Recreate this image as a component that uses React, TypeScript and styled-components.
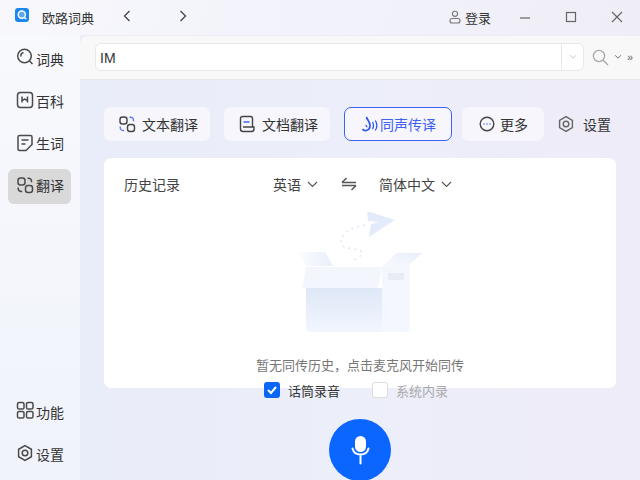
import React from "react";
import styled, { createGlobalStyle } from "styled-components";

const Global = createGlobalStyle`
  html, body { margin: 0; padding: 0; overflow: hidden; }
  body { font-family: "Noto Sans CJK SC", "Liberation Sans", sans-serif; }
  * { box-sizing: border-box; }
`;
const Root = styled.div`
  width: 640px; height: 480px; display: flex; flex-direction: column; overflow: hidden;
  background: linear-gradient(105deg, #f8f8fc 0%, #f3f4fb 30%, #eeecf6 100%);
  color: #333;
`;
const TitleBar = styled.header`
  height: 35px; flex: none; display: flex; align-items: center; padding-left: 15px;
`;
const Logo = styled.svg`width: 14px; height: 14px; flex: none; margin-top: -5px;`;
const AppName = styled.span`font-size: 13px; margin-left: 13px; width: 52px; line-height: 18px; margin-top: 1px; color: #333;`;
const NavIcon = styled.svg<{ $ml: number }>`
  width: 10px; height: 12px; margin-left: ${p => p.$ml}px; margin-top: -3px; flex: none;
  fill: none; stroke: #444; stroke-width: 1.3;
`;
const Login = styled.div`
  display: flex; align-items: center; gap: 4px; margin-left: auto; font-size: 13px; line-height: 18px; color: #333;
`;
const LoginIcon = styled.svg`width: 12px; height: 14px; fill: none; stroke: #777; stroke-width: 1.1; margin-top: -2px;`;
const WinButtons = styled.div`display: flex; margin-left: 26px; margin-right: 15px; gap: 30px; margin-top: -1px;`;
const WinIcon = styled.svg`width: 16px; height: 16px; fill: none; stroke: #666; stroke-width: 1.2;`;
const Body = styled.div`flex: 1; display: flex; min-height: 0;`;
const Sidebar = styled.nav`
  width: 80px; flex: none; display: flex; flex-direction: column; padding: 6px 8px 2px;
  background: linear-gradient(180deg, #f8f9fd 0%, #f0f3fb 100%);
`;
const SideItem = styled.div<{ $active?: boolean }>`
  width: 63px; height: 35px; display: flex; align-items: center; padding-left: 8px; gap: 2px;
  font-size: 14px; color: #333; border-radius: 6px; margin-bottom: 7px; flex: none;
  margin-top: ${p => (p.$active ? "2px" : "0")};
  padding-bottom: ${p => (p.$active ? "4px" : "0")};
  background: ${p => (p.$active ? "#d9d9da" : "transparent")};
`;
const Spacer = styled.div`flex: 1;`;
const SideIcon = styled.svg<{ $dy: number }>`
  width: 18px; height: 18px; flex: none; fill: none; stroke: #4a4a4a; stroke-width: 1.5; margin-top: ${p => p.$dy}px;
`;
const Main = styled.main`
  flex: 1; min-width: 0; display: flex; flex-direction: column;
  background: linear-gradient(90deg, #e9edf9 0%, #eceef9 50%, #eeecf8 100%);
`;
const SearchBar = styled.div`
  height: 45px; flex: none; display: flex; align-items: center; padding: 0 0 1px 15px;
  background: #f8f8f8; border-bottom: 1px solid #e6e6ea; border-top-left-radius: 8px;
  border-top: 1px solid #eeeef2;
`;
const InputBox = styled.div`
  width: 489px; height: 28px; background: #fff; border: 1px solid #e8e8e8; border-radius: 6px;
  display: flex; align-items: center; font-size: 14px; color: #333; font-family: "Liberation Sans", sans-serif;
  padding-left: 4px;
`;
const InputText = styled.span`flex: 1; padding-top: 2px;`;
const DropCell = styled.div`
  width: 22px; height: 100%; border-left: 1px solid #e8e8e8; display: flex; align-items: center; justify-content: center;
`;
const SmallChevron = styled.svg<{ $c?: string }>`
  width: 8px; height: 6px; fill: none; stroke: ${p => p.$c ?? "#777"}; stroke-width: 1;
`;
const SearchTools = styled.div`display: flex; align-items: center; margin-left: 8px; gap: 5px;`;
const SearchIcon = styled.svg`width: 17px; height: 17px; fill: none; stroke: #a5a5a5; stroke-width: 1.3;`;
const More = styled.span`font-size: 11px; font-weight: 700; color: #888; font-family: "Liberation Sans", sans-serif; line-height: 10px;`;
const Content = styled.div`flex: 1; padding: 27px 24px 0; display: flex; flex-direction: column; align-items: stretch;`;
const Tabs = styled.div`display: flex; height: 34px; flex: none;`;
const Tab = styled.div<{ $w: number; $ml: number; $gap: number; $pl?: number; $active?: boolean; $plain?: boolean }>`
  width: ${p => p.$w}px; margin-left: ${p => p.$ml}px; height: 34px; border-radius: 7px;
  display: flex; align-items: center; justify-content: center; gap: ${p => p.$gap}px; font-size: 14px;
  padding-left: ${p => p.$pl ?? 0}px; white-space: nowrap;
  color: ${p => (p.$active ? "#3f5ff5" : "#333")};
  background: ${p => (p.$plain ? "transparent" : "#f6f6fc")};
  border: ${p => (p.$active ? "1px solid #3f62f5" : "none")};
`;
const TabIcon = styled.svg<{ $c?: string }>`
  width: 18px; height: 18px; flex: none; fill: none; stroke: ${p => p.$c ?? "#444"}; stroke-width: 1.4;
`;
const Card = styled.section`
  height: 230px; margin-top: 17px; flex: none; background: #fff; border-radius: 7px; display: flex; flex-direction: column; align-items: center;
`;
const CardHead = styled.div`
  width: 100%; height: 54px; flex: none; display: flex; align-items: center; font-size: 14px; padding: 0 0 2px 20px; color: #444;
`;
const LangSelect = styled.div<{ $ml: number }>`display: flex; align-items: center; gap: 6px; margin-left: ${p => p.$ml}px;`;
const ArrowDown = styled.svg`width: 11px; height: 7px; fill: none; stroke: #555; stroke-width: 1.1;`;
const Swap = styled.svg`width: 16px; height: 14px; margin-left: 23px; fill: none; stroke: #555; stroke-width: 1.5;`;
const Illustration = styled.svg`width: 160px; height: 128px; flex: none;`;
const EmptyText = styled.p`margin: 15px 0 0; font-size: 13px; line-height: 20px; color: #777;`;
const Options = styled.div`display: flex; height: 20px; margin-top: -8px; margin-left: 160px; flex: none; align-items: center; position: relative;`;
const Option = styled.label<{ $muted?: boolean; $w: number }>`
  display: flex; align-items: center; gap: 8px; font-size: 13px; width: ${p => p.$w}px;
  color: ${p => (p.$muted ? "#aaa" : "#333")};
`;
const Check = styled.span<{ $on?: boolean }>`
  width: 16px; height: 16px; border-radius: 3px; flex: none; display: flex; align-items: center; justify-content: center;
  background: ${p => (p.$on ? "#0a66f5" : "#fff")};
  border: ${p => (p.$on ? "none" : "1px solid #dcdcdc")};
`;
const CheckMark = styled.svg`width: 12px; height: 12px; fill: none; stroke: #fff; stroke-width: 2;`;
const MicButton = styled.button`
  width: 62px; height: 62px; border-radius: 50%; border: none; padding: 0; background: #0a66ff; display: flex; align-items: center; justify-content: center;
  margin: 19px auto 0; flex: none;
`;
const MicIcon = styled.svg`width: 26px; height: 30px; fill: none; stroke: #fff;`;

const Chev = () => <path d="M1 1.2l3 3 3-3" />;
const Hex = () => (<><path d="M9 1.6l6.4 3.7v7.4L9 16.4l-6.4-3.7V5.3z" /><circle cx="9" cy="9" r="2.8" /></>);
const TransIcon = ({ accent }: { accent?: boolean }) => (
  <>
    <rect x="2" y="2" width="7" height="7" rx="2.5" />
    <path d="M11.500 2.200h1a3 3 0 0 1 3 3v1" stroke={accent ? "#5b7cf7" : undefined} />
    <rect x="9.500" y="9.500" width="7" height="7" rx="2.500" />
    <path d="M2.200 11.500v1a3 3 0 0 0 3 3h1" stroke={accent ? "#5b7cf7" : undefined} />
  </>
);

export default function App() {
  return (
    <Root>
      <Global />
      <TitleBar>
        <Logo viewBox="0 0 14 14">
          <rect width="14" height="14" rx="3" fill="#1a86ee" />
          <circle cx="6.800" cy="6.600" r="3.600" fill="#5aa8f0" stroke="#fff" strokeWidth="1.400" />
          <path d="M9 9.400l2.400 1.600" stroke="#fff" strokeWidth="1.400" />
        </Logo>
        <AppName>欧路词典</AppName>
        <NavIcon $ml={28} viewBox="0 0 10 12"><path d="M7.500 1L2.500 6l5 5" /></NavIcon>
        <NavIcon $ml={46} viewBox="0 0 10 12"><path d="M2.500 1l5 5-5 5" /></NavIcon>
        <Login>
          <LoginIcon viewBox="0 0 12 14">
            <circle cx="6" cy="3.800" r="2.600" />
            <rect x="1" y="8.500" width="10" height="4.500" rx="2" />
          </LoginIcon>
          登录
        </Login>
        <WinButtons>
          <WinIcon viewBox="0 0 16 16"><path d="M3 9h10" /></WinIcon>
          <WinIcon viewBox="0 0 16 16"><rect x="3.500" y="3.500" width="9" height="9" /></WinIcon>
          <WinIcon viewBox="0 0 16 16"><path d="M3 3l10 10M13 3L3 13" /></WinIcon>
        </WinButtons>
      </TitleBar>
      <Body>
        <Sidebar>
          <SideItem>
            <SideIcon $dy={-4} viewBox="0 0 18 18"><circle cx="8.500" cy="8" r="6.800" /><path d="M5 8.500a3.500 3.500 0 0 1 2.500-4M13.500 13l3 3" /></SideIcon>
            词典
          </SideItem>
          <SideItem>
            <SideIcon $dy={-1} viewBox="0 0 18 18"><rect x="1.500" y="1.500" width="15" height="15" rx="3" /><path d="M6 5.500v6M11.500 5.500v6M6 9.500l2.800-1.500 2.700 1.500" /></SideIcon>
            百科
          </SideItem>
          <SideItem>
            <SideIcon $dy={1} viewBox="0 0 18 18"><path d="M3.500 1.500h11a1.500 1.500 0 0 1 1.500 1.500v7.500l-6 6H3.500A1.500 1.500 0 0 1 2 15V3a1.500 1.500 0 0 1 1.500-1.500zM5.500 6h7M5.500 10h4" /></SideIcon>
            生词
          </SideItem>
          <SideItem $active>
            <SideIcon $dy={0} viewBox="0 0 18 18"><TransIcon /></SideIcon>
            翻译
          </SideItem>
          <Spacer />
          <SideItem>
            <SideIcon $dy={-4} viewBox="0 0 18 18"><rect x="1.500" y="1.500" width="6.500" height="6.500" rx="1.600" /><rect x="10.500" y="1.500" width="6.500" height="6.500" rx="1.600" /><rect x="1.500" y="10.500" width="6.500" height="6.500" rx="1.600" /><rect x="10.500" y="10.500" width="6.500" height="6.500" rx="1.600" /></SideIcon>
            功能
          </SideItem>
          <SideItem>
            <SideIcon $dy={-1} viewBox="0 0 18 18"><Hex /></SideIcon>
            设置
          </SideItem>
        </Sidebar>
        <Main>
          <SearchBar>
            <InputBox>
              <InputText>IM</InputText>
              <DropCell><SmallChevron $c="#c8c8c8" viewBox="0 0 8 6"><Chev /></SmallChevron></DropCell>
            </InputBox>
            <SearchTools>
              <SearchIcon viewBox="0 0 17 17"><circle cx="7" cy="7" r="5.600" /><path d="M11 11l5 5" /></SearchIcon>
              <SmallChevron viewBox="0 0 8 6"><Chev /></SmallChevron>
              <More>»</More>
            </SearchTools>
          </SearchBar>
          <Content>
            <Tabs>
              <Tab $w={106} $ml={0} $gap={6} $pl={2}>
                <TabIcon viewBox="0 0 18 18"><TransIcon accent /></TabIcon>文本翻译
              </Tab>
              <Tab $w={106} $ml={14} $gap={6} $pl={2}>
                <TabIcon viewBox="0 0 18 18">
                  <path d="M4.500 1.500h8A2 2 0 0 1 14.500 3.500v8.500H16M2.500 3.500a2 2 0 0 1 2-2M2.500 3.500v10.500a2.500 2.500 0 0 0 2.500 2.500h8.500a2.500 2.500 0 0 0 2.500-2.500v-2H5" />
                  <path d="M5.500 7h6" stroke="#4a6cf7" strokeWidth="1.600" />
                </TabIcon>文档翻译
              </Tab>
              <Tab $w={108} $ml={14} $gap={2} $active>
                <TabIcon $c="#2f55f0" viewBox="0 0 18 18">
                  <path d="M6.500 2c.5 3 3.500 4.500 3.500 8.500 0 2.500-1.500 4.500-3.800 5-1.500.3-3-.4-3.700-1.500" strokeWidth="1.700" />
                  <path d="M5.500 10.500c1 0 1.500.8 1.200 1.700" strokeWidth="1.300" />
                  <path d="M12.500 7c1.300 2.300 1.300 4.700 0 7M15.300 5.500c2 3.200 2 6.800 0 10" strokeWidth="1.300" />
                </TabIcon>同声传译
              </Tab>
              <Tab $w={82} $ml={10} $gap={4}>
                <TabIcon viewBox="0 0 18 18">
                  <circle cx="9" cy="9" r="6.800" />
                  <path d="M5.500 9h1M8.500 9h1M11.500 9h1" stroke="#3f5ff5" strokeWidth="1.500" />
                </TabIcon>更多
              </Tab>
              <Tab $w={58} $ml={11} $gap={8} $plain>
                <TabIcon $c="#666" viewBox="0 0 18 18"><Hex /></TabIcon>设置
              </Tab>
            </Tabs>
            <Card>
              <CardHead>
                历史记录
                <LangSelect $ml={93}>英语<ArrowDown viewBox="0 0 11 7"><path d="M1 1l4.500 4.500L10 1" /></ArrowDown></LangSelect>
                <Swap viewBox="0 0 16 14"><path d="M1 5.500h14M1 5.500L5.500 1M15 8.500H1M15 8.500L10.500 13" /></Swap>
                <LangSelect $ml={22}>简体中文<ArrowDown viewBox="0 0 11 7"><path d="M1 1l4.500 4.500L10 1" /></ArrowDown></LangSelect>
              </CardHead>
              <Illustration viewBox="0 12 160 128">
                <defs>
                  <linearGradient id="front" x1="0" y1="0" x2="0" y2="1">
                    <stop offset="0" stopColor="#dfe8f7" />
                    <stop offset="1" stopColor="#f1f6fe" />
                  </linearGradient>
                  <linearGradient id="flapL" x1="0" y1="0" x2="1" y2="0">
                    <stop offset="0" stopColor="#fbfcff" />
                    <stop offset="1" stopColor="#e9eefa" />
                  </linearGradient>
                  <linearGradient id="flapR" x1="0" y1="1" x2="1" y2="0">
                    <stop offset="0" stopColor="#f8faff" />
                    <stop offset="1" stopColor="#e9eefa" />
                  </linearGradient>
                </defs>
                <path d="M87 11l28 9-26 17 2-13 8-2-11-1z" fill="#e3ebfa" />
                <path d="M85 25C70 27 60 35 61 43C62 50 80 48 82 52C83 56 75 60 70 61" fill="none" stroke="#dde6f6" strokeWidth="1.400" strokeDasharray="2 4" />
                <path d="M18 52h27l8 14H26z" fill="url(#flapL)" />
                <path d="M102 66l15-13h25l-14 13z" fill="url(#flapR)" />
                <path d="M26 88h76v44H30a4 4 0 0 1-4-4z" fill="url(#front)" />
                <path d="M102 66h28v62a4 4 0 0 1-4 4h-24z" fill="#f4f7fd" />
                <path d="M26 67h76l-4 21H22z" fill="#f3f7fd" />
                <rect x="108" y="73" width="16" height="7" fill="#e7ebf4" />
              </Illustration>
              <EmptyText>暂无同传历史，点击麦克风开始同传</EmptyText>
            </Card>
            <Options>
              <Option $w={108}>
                <Check $on><CheckMark viewBox="0 0 12 12"><path d="M2 6l3 3 5-6" /></CheckMark></Check>话筒录音
              </Option>
              <Option $muted $w={90}><Check />系统内录</Option>
            </Options>
            <MicButton aria-label="麦克风">
              <MicIcon viewBox="0 0 26 30">
                <rect x="8" y="1" width="11" height="16" rx="5.500" fill="#fff" stroke="none" />
                <path d="M5.500 13.500c1 4 4 6 8 6s7-2 8-6M13.500 19.500v9" strokeWidth="2" strokeLinecap="round" />
              </MicIcon>
            </MicButton>
          </Content>
        </Main>
      </Body>
    </Root>
  );
}
